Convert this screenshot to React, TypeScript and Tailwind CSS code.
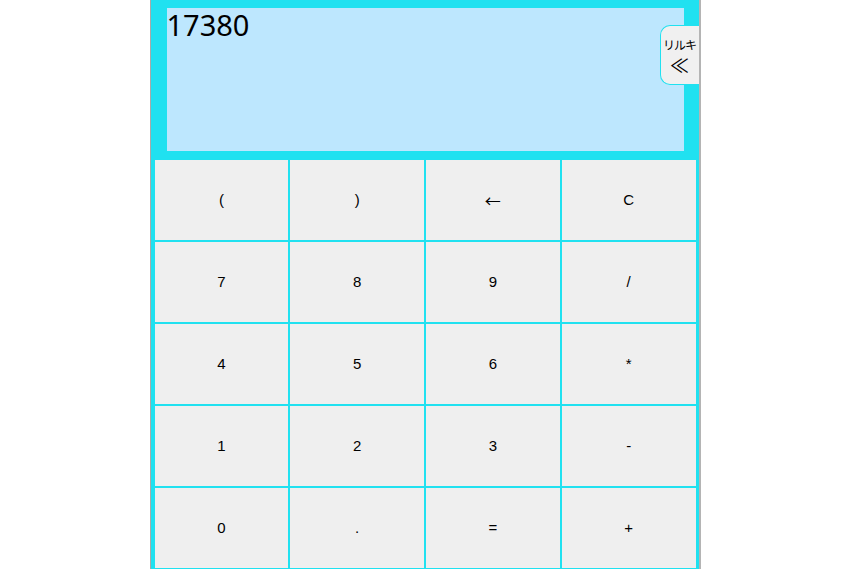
const keys = ["(", ")", "←", "C", "7", "8", "9", "/", "4", "5", "6", "*", "1", "2", "3", "-", "0", ".", "=", "+"];

export default function App() {
  return (
    <div className="min-h-[569px] w-full bg-white">
      <div className="relative mx-auto w-[551px] border-l border-r-2 border-l-[#a9a9a9] border-r-[#b4b4b4] bg-[#20e1f0] pb-[1px]">
        <div className="ml-4 mr-[15px] pt-2">
          <div className="h-[143px] bg-[#bde7fe]">
            <span className="block text-[29px] leading-[34px] text-black [font-family:'Noto_Sans','Open_Sans',sans-serif]">
              17380
            </span>
          </div>
        </div>

        <div className="absolute right-0 top-[25px] flex h-[60px] w-[39px] flex-col items-center justify-center rounded-l-[10px] border border-r-0 border-[#20e1f0] bg-[#f0f0f0] text-black">
          <span className="text-[12px] leading-[16px] tracking-[-1px] [font-family:'Noto_Sans_CJK_JP',sans-serif]">リルキ</span>
          <span className="mt-[3px] text-[19px] leading-[18px] [font-family:'Noto_Sans_CJK_JP',sans-serif]">≪</span>
        </div>

        <div className="mt-[9px] grid grid-cols-4 gap-[2px] pl-1 pr-[3px]">
          {keys.map((k) => (
            <button
              key={k}
              className="flex h-[80px] items-center justify-center bg-[#efefef] text-[15px] text-black [font-family:'Liberation_Sans',Arial,sans-serif]"
            >
              {k === "←" ? (
                <span className="text-[16px] [font-family:'Noto_Sans_CJK_JP',sans-serif]">←</span>
              ) : (
                k
              )}
            </button>
          ))}
        </div>
      </div>
    </div>
  );
}
